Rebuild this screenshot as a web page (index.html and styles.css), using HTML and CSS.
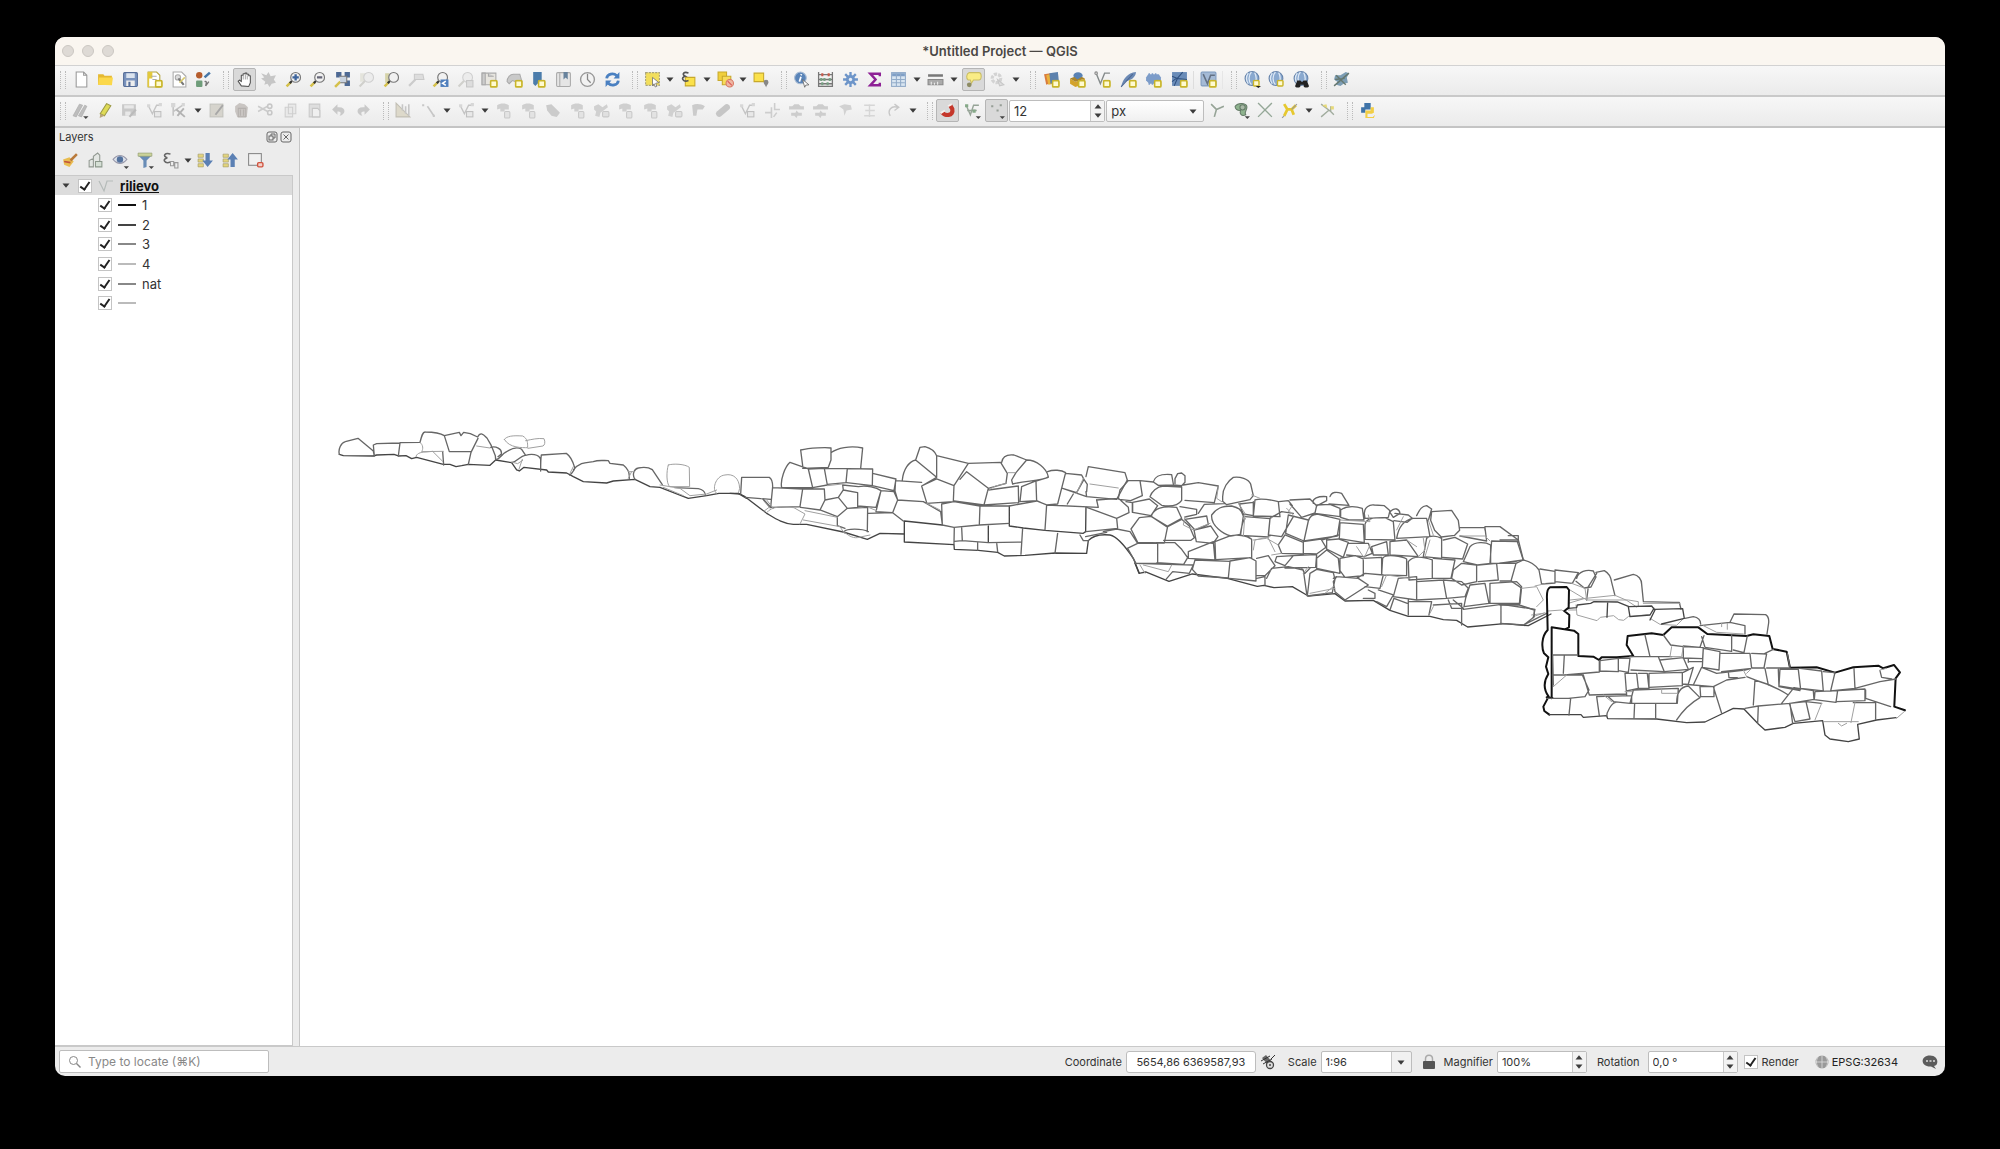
FILE: index.html
```
<!DOCTYPE html>
<html lang="en">
<head>
<meta charset="UTF-8">
<meta name="viewport" content="width=device-width, initial-scale=1.0">
<title>*Untitled Project — QGIS</title>
<link rel="stylesheet" href="styles.css">
</head>
<body>

<!-- shared shapes -->
<svg class="sprite" aria-hidden="true">
  <symbol id="down" viewBox="0 0 8 5"><path d="M0.500 0.500h7L4 4.800z" fill="#3c3c3c"/></symbol>
  <symbol id="up" viewBox="0 0 8 5"><path d="M0.500 4.500h7L4 0.200z" fill="#3c3c3c"/></symbol>
  <symbol id="plus" viewBox="0 0 8 8"><rect x="1" y="1" width="6" height="6" rx="1" fill="#fffbd0" stroke="#c9b52a" stroke-width="1.6"/></symbol>
  <symbol id="lens" viewBox="0 0 16 16"><path d="M1.5 14.5l4-4" stroke="#d5c14c" stroke-width="2.4"/><path d="M4.5 11.5l2-2" stroke="#333" stroke-width="2"/><circle cx="10" cy="6" r="4.6" fill="#f1f1f1" stroke="#777" stroke-width="1.1"/></symbol>
  <symbol id="lens-off" viewBox="0 0 16 16"><path d="M1.5 14.5l5-5" stroke="#d0d0cc" stroke-width="2"/><circle cx="10" cy="6" r="4.6" fill="#ececec" stroke="#cfcfcf"/></symbol>
  <symbol id="globe" viewBox="0 0 16 16"><circle cx="7.500" cy="7" r="6.500" fill="#8aa9cf" stroke="#6784ab"/><path d="M7 1c-3 3-3 9 0 12M10 1.500c2 3 2 8 0 11M4 2c-2 3-2 7 0 10" fill="none" stroke="#dce8f5" stroke-width="1.200"/></symbol>
  <symbol id="shape-a" viewBox="0 0 16 16"><path d="M2 3c3-2 8-2 11 0v4H9v2H5V6L2 7z" fill="#cfcfcf"/><rect x="9" y="9" width="5" height="6" rx="1" fill="#e3e3e3" stroke="#c8c8c8"/></symbol>
  <symbol id="shape-b" viewBox="0 0 16 16"><path d="M1 4l4-2 4 3 4-3 1 3-4 3-3 2-1 4-4-1 1-4-2-2z" fill="#d0d0d0"/><rect x="9" y="9" width="6" height="5" rx="1" fill="#e0e0e0" stroke="#c8c8c8"/></symbol>
  <symbol id="shape-c" viewBox="0 0 16 16"><path d="M1 4h3l2-2h4l2 2h3v3H1zM3 10h4l1-2 2 2h3v3H9l-1 2-2-2H3z" fill="#cdcdcd"/></symbol>
  <symbol id="nodes-off" viewBox="0 0 16 16"><path d="M2 3l4 8 4-8h4" fill="none" stroke="#c4c4c4" stroke-width="1.300"/><path d="M1 2h3v3H1zM12 1h3v3h-3z" fill="#d7d7d7"/><rect x="8" y="9" width="6" height="5" fill="#e8e8e8" stroke="#bfbfbf"/></symbol>
</svg>

<div class="window">
  <header class="titlebar">
    <div class="lights"><span></span><span></span><span></span></div>
    <h1>*Untitled Project — QGIS</h1>
  </header>

  <div class="toolbar">
    <div class="group g-file">
      <button class="tool" aria-label="New"><svg viewBox="0 0 16 16"><path d="M3 1h7l3 3v11H3z" fill="#fff" stroke="#999"/><path d="M10 1v3h3" fill="none" stroke="#999"/></svg></button>
      <button class="tool" aria-label="Open"><svg viewBox="0 0 16 16"><path d="M1 3h5l1 1.500h7V13H1z" fill="#e5b932"/><path d="M1 13L2 6h13l-1 7.500z" fill="#fbd84b"/></svg></button>
      <button class="tool" aria-label="Save"><svg viewBox="0 0 16 16"><rect x="1.500" y="1.500" width="13" height="13" rx="1" fill="#7a93bd" stroke="#566d98"/><path d="M4 2h8v4.500H4z" fill="#dbe3ee"/><path d="M4 9h8v5H4z" fill="#eee"/><path d="M6 10h2v4H6z" fill="#566d98"/></svg></button>
      <button class="tool" aria-label="New layout"><svg viewBox="0 0 16 16"><path d="M2 1h8l3 3v11H2z" fill="#fff" stroke="#b3a33d"/><path d="M2 1h4v6H3v8H1.500V1z" fill="#e3c93c"/><path d="M5 5h5M6 8h4" stroke="#aaa"/><use href="#plus" x="8" y="8" width="8" height="8"/></svg></button>
      <button class="tool" aria-label="Layout manager"><svg viewBox="0 0 16 16"><path d="M2 1h8l4 4v10H2z" fill="#fff" stroke="#aaa"/><circle cx="6.500" cy="6" r="2.500" fill="#ddd" stroke="#aaa"/><path d="M7 7l5 6" stroke="#777" stroke-width="2"/><path d="M8 11l5-5" stroke="#d8ca70" stroke-width="1.500"/></svg></button>
      <button class="tool" aria-label="Style manager"><svg viewBox="0 0 16 16"><circle cx="4" cy="4" r="3" fill="#b65d2d"/><rect x="1" y="9" width="6" height="6" rx="1" fill="#6f9d7a"/><path d="M9 6l5-4.500" stroke="#4677a8" stroke-width="2.400"/><path d="M9 10c2-1 2 1 1 4l3-4" fill="none" stroke="#777" stroke-width="1.300"/></svg></button>
    </div>
    <div class="group g-nav">
      <button class="tool on" aria-label="Pan"><svg viewBox="0 0 16 16"><path d="M5 14L2 9.500 3.500 8.500 5 10V4h1.700V2.500h1.800V2h1.700v1h1.800v1.500h1.500V11L12 14.500z" fill="#fff" stroke="#555" stroke-linejoin="round"/><path d="M6.800 4v4M8.800 3v5M10.600 4v4" stroke="#888" stroke-width=".7"/></svg></button>
      <button class="tool" aria-label="Pan to selection"><svg viewBox="0 0 16 16"><path d="M1 2l5 2 2-3 2 4 5-1-2 4 2 3-4 1-2 3-2-3-3 1 1-3-4-3 3-1z" fill="#c6c6c6"/></svg></button>
      <button class="tool" aria-label="Zoom in"><svg viewBox="0 0 16 16"><use href="#lens"/><path d="M7 6h6M10 3v6" stroke="#3e659d" stroke-width="2.200"/></svg></button>
      <button class="tool" aria-label="Zoom out"><svg viewBox="0 0 16 16"><use href="#lens"/><path d="M7.500 6h5" stroke="#667" stroke-width="2"/></svg></button>
      <button class="tool" aria-label="Zoom full"><svg viewBox="0 0 16 16"><path d="M2 1h5v5H2zM10 1h5v5h-5zM10 9h5v5h-5z" fill="#4d6994"/><path d="M1 15l5-5" stroke="#d5c14c" stroke-width="2.400"/><path d="M5 5h7v6H6" fill="#c8d2df" stroke="#777"/></svg></button>
      <button class="tool" aria-label="Zoom to selection"><svg viewBox="0 0 16 16"><path d="M2 2h5v8H2z" fill="#e4e4dc"/><use href="#lens-off"/></svg></button>
      <button class="tool" aria-label="Zoom to layer"><svg viewBox="0 0 16 16"><path d="M2 2h4v9H2z" fill="#d6d3a9"/><use href="#lens"/></svg></button>
      <button class="tool" aria-label="Zoom native"><svg viewBox="0 0 16 16"><path d="M1 14l6-6" stroke="#ccc" stroke-width="2"/><path d="M6 3h8l1 5H6z" fill="#ddd" stroke="#c9c9c9"/></svg></button>
      <button class="tool" aria-label="Zoom last"><svg viewBox="0 0 16 16"><use href="#lens"/><rect x="8" y="8" width="7.500" height="7" fill="#4f7fbd"/><path d="M13 9.500l-3 2 3 2" fill="none" stroke="#fff" stroke-width="1.500"/></svg></button>
      <button class="tool" aria-label="Zoom next"><svg viewBox="0 0 16 16"><use href="#lens-off"/><rect x="9" y="9" width="6" height="6" fill="#ddd" stroke="#c6c6c6"/></svg></button>
      <button class="tool" aria-label="New map view"><svg viewBox="0 0 16 16"><path d="M1 2h13v11H1z" fill="#e7e5df" stroke="#aaa"/><path d="M1 2h3v11H1zM7 2v3h5" fill="#ccc" stroke="#aaa"/><use href="#plus" x="8" y="8" width="8" height="8"/></svg></button>
      <button class="tool" aria-label="New 3D view"><svg viewBox="0 0 16 16"><path d="M1 10c0-4 3-7 6-7h6l2 7H9L6 9l-3 3z" fill="#c9c9c9" stroke="#aaa"/><use href="#plus" x="8" y="8" width="8" height="8"/></svg></button>
      <button class="tool" aria-label="New bookmark"><svg viewBox="0 0 16 16"><path d="M3 1h8v12l-3-2-3 3-2-2z" fill="#4b7cab"/><use href="#plus" x="7" y="8" width="8" height="8"/></svg></button>
      <button class="tool" aria-label="Bookmarks"><svg viewBox="0 0 16 16"><rect x="1.500" y="1.500" width="13" height="13" rx="1" fill="#e5e5e5" stroke="#aaa"/><path d="M4.500 2v12" stroke="#aaa"/><path d="M8 1h4v7l-2-2-2 2z" fill="#67829c"/></svg></button>
      <button class="tool" aria-label="Temporal controller"><svg viewBox="0 0 16 16"><circle cx="8" cy="8" r="6.500" fill="#f2f2f2" stroke="#999" stroke-width="1.300"/><path d="M8 2.500V8l3 3" fill="none" stroke="#888" stroke-width="1.200"/></svg></button>
      <button class="tool" aria-label="Refresh"><svg viewBox="0 0 16 16"><path d="M2.500 7C3 2.500 9 1.500 12 4.500M13.500 9C13 13.500 7 14.500 4 11.500" fill="none" stroke="#4a80c1" stroke-width="2.600"/><path d="M14.500 1v6H9zM1.500 15V9H7z" fill="#4a80c1"/></svg></button>
    </div>
    <div class="group g-select">
      <button class="tool" aria-label="Select features"><svg viewBox="0 0 16 16"><path d="M1.500 1.500h13v12h-13z" fill="#f2de5c" stroke="#a8a37c" stroke-dasharray="2 1"/><path d="M8 6l6 5-3 .5 1 3-1.500.5-1-3-1.500 2z" fill="#fff" stroke="#777" stroke-width=".8"/></svg></button><button class="arrow" aria-label="Select menu"><svg><use href="#down"/></svg></button>
      <button class="tool" aria-label="Select by expression"><svg viewBox="0 0 16 16"><path d="M5 6h9v8H5z" fill="#fbe14a" stroke="#c8a92b"/><path d="M8 2C4 0 1 3 5 5c-5 1-2 6 3 4" fill="none" stroke="#555" stroke-width="1.500"/></svg></button><button class="arrow" aria-label="Expression menu"><svg><use href="#down"/></svg></button>
      <button class="tool" aria-label="Deselect"><svg viewBox="0 0 16 16"><path d="M1 1h8v8H1z" fill="#f0cf3c" stroke="#c8a92b"/><path d="M5 5h8v8H5z" fill="#f7db5a" stroke="#c8a92b"/><circle cx="12" cy="11.500" r="3.500" fill="#efb7a3" stroke="#d77762"/><path d="M10 9.500l4 4" stroke="#d55"/></svg></button><button class="arrow" aria-label="Deselect menu"><svg><use href="#down"/></svg></button>
      <button class="tool" aria-label="Select by location"><svg viewBox="0 0 16 16"><path d="M1 2h9v8H1z" fill="#fbe14a" stroke="#c8a92b"/><path d="M10 10.500a2.300 2.300 0 1 1 4.600 0c0 2-2 2.500-2.300 5C12 13 10 12.500 10 10.500z" fill="#888"/></svg></button>
    </div>
    <div class="group g-attr">
      <button class="tool" aria-label="Identify"><svg viewBox="0 0 16 16"><circle cx="7" cy="6.500" r="5.500" fill="#5984b9" stroke="#a9bcd4"/><path d="M7.500 5.500L6 10M8 3l-.5 1" stroke="#fff" stroke-width="1.600"/><path d="M9 8l6 5-3 .3-1 2z" fill="#fff" stroke="#666" stroke-width=".8"/></svg></button>
      <button class="tool" aria-label="Field calculator"><svg viewBox="0 0 16 16"><path d="M1.500 1v14M14.500 1v14M2 3.500h12M2 8h12M2 12h12M2 14.500h12" stroke="#777" stroke-width="1.200"/><path d="M4 2h2v3H4zM10 2h2v3h-2z" fill="#c75a4a"/><path d="M3 6.500h2v3H3zM6 6.500h2v3H6zM11 6.500h2v3h-2zM4 10.500h2v3H4zM9 10.500h2v3H9z" fill="#77a083"/></svg></button>
      <button class="tool" aria-label="Toolbox"><svg viewBox="0 0 16 16"><path d="M8 1v14M1 8h14M3 3l10 10M13 3L3 13" stroke="#6d95c9" stroke-width="2.200"/><circle cx="8" cy="8" r="4.300" fill="#6d95c9"/><circle cx="8" cy="8" r="1.600" fill="#e6edf6"/></svg></button>
      <button class="tool" aria-label="Statistics"><svg viewBox="0 0 16 16"><path d="M13 5V2.500H4L9 8l-5 5.500h9V11" fill="none" stroke="#8e2196" stroke-width="2.300"/></svg></button>
      <button class="tool" aria-label="Attribute table"><svg viewBox="0 0 16 16"><rect x="1.500" y="1.500" width="13" height="13" fill="#d8e5f1" stroke="#91abc8"/><path d="M2 2h12v3H2z" fill="#7f9fc6"/><path d="M2 8h12M2 11h12M6 2v12M10 2v12" stroke="#91abc8"/></svg></button><button class="arrow" aria-label="Table menu"><svg><use href="#down"/></svg></button>
      <button class="tool" aria-label="Measure"><svg viewBox="0 0 16 16"><path d="M1 3h14v2.500H1z" fill="#777"/><path d="M1 8h14v5H1z" fill="#aaa" stroke="#888"/><path d="M4 10v3M7 11v2M10 10v3" stroke="#eee"/></svg></button><button class="arrow" aria-label="Measure menu"><svg><use href="#down"/></svg></button>
      <button class="tool on" aria-label="Map tips"><svg viewBox="0 0 16 16"><path d="M4 1.500h9c3 0 3 7 0 7H8l-2 3-1-3H3c-2-1-2-6 1-7z" fill="#f9ec85" stroke="#c9bd65"/><circle cx="4" cy="13" r="2.200" fill="#8d8b63"/></svg></button>
      <button class="tool" aria-label="Actions"><svg viewBox="0 0 16 16"><circle cx="7" cy="7" r="4" fill="none" stroke="#d3d3d3" stroke-width="3" stroke-dasharray="3 1"/><path d="M8 8l6 5-4 1z" fill="#ddd" stroke="#c8c8c8"/></svg></button><button class="arrow" aria-label="Actions menu"><svg><use href="#down"/></svg></button>
    </div>
    <div class="group g-source">
      <button class="tool" aria-label="Data source manager"><svg viewBox="0 0 16 16"><path d="M1 3l6-1 1 9-5 2z" fill="#d97b3c"/><path d="M3 4l7-2 1 10-6 1z" fill="#e9b23c"/><path d="M6 2l8-1 1 9-8 2z" fill="#5c81ad"/><use href="#plus" x="8" y="8" width="8" height="8"/></svg></button>
      <button class="tool" aria-label="New GeoPackage"><svg viewBox="0 0 16 16"><path d="M1 7l5 3v5l-5-3zM6 10l9-3v5l-9 3z" fill="#d3a32c"/><path d="M1 7l8-3 6 3-9 3z" fill="#a8842c"/><path d="M4 5c0-5 9-5 9 0L8 8z" fill="#5982b4"/><use href="#plus" x="8" y="8" width="8" height="8"/></svg></button>
      <button class="tool" aria-label="New shapefile"><svg viewBox="0 0 16 16"><path d="M2 2l4 10 4-10h5" fill="none" stroke="#858b8b" stroke-width="1.300"/><circle cx="2" cy="2" r="1.200" fill="#eee" stroke="#888"/><use href="#plus" x="8" y="8" width="8" height="8"/></svg></button>
      <button class="tool" aria-label="New SpatiaLite layer"><svg viewBox="0 0 16 16"><path d="M1 15C3 7 7 2 15 1c0 5-5 8-10 9z" fill="#6b89b5"/><path d="M1 15L12 3" stroke="#4d6994"/><use href="#plus" x="8" y="8" width="8" height="8"/></svg></button>
      <button class="tool" aria-label="New memory layer"><svg viewBox="0 0 16 16"><path d="M3 3h10l2 3v6H4L1 9V6z" fill="#7c9cc9"/><path d="M4 2v2M7 2v2M10 2v2M4 11v2M7 11v2" stroke="#7c9cc9" stroke-width="1.400"/><use href="#plus" x="8" y="8" width="8" height="8"/></svg></button>
      <button class="tool" aria-label="New mesh layer"><svg viewBox="0 0 16 16"><rect x="1" y="1" width="14" height="13" fill="#6a8cb8"/><path d="M1 5l5 2 5-6M6 7l-3 7M6 7l9 1M1 10l4-3" fill="none" stroke="#2f507f"/><use href="#plus" x="8" y="8" width="8" height="8"/></svg></button>
      <span class="rule"></span>
      <button class="tool" aria-label="New virtual layer"><svg viewBox="0 0 16 16"><rect x="1" y="1" width="14" height="13" rx="1" fill="#a4bad6" stroke="#7f9bbf"/><path d="M3 3l4 9 3-8h4" fill="none" stroke="#637184" stroke-width="1.500"/><use href="#plus" x="8" y="8" width="8" height="8"/></svg></button>
      <span class="rule faint"></span>
    </div>
    <div class="group g-web">
      <button class="tool" aria-label="Add web service"><svg viewBox="0 0 16 16"><use href="#globe"/><use href="#plus" x="8" y="8" width="7" height="7"/><path d="M11 14h5l-2.500 2z" fill="#222"/></svg></button>
      <button class="tool" aria-label="Add map service"><svg viewBox="0 0 16 16"><use href="#globe"/><use href="#plus" x="8" y="8" width="7" height="7"/></svg></button>
      <button class="tool" aria-label="Search catalog"><svg viewBox="0 0 16 16"><use href="#globe"/><path d="M4 9h3l1 1h1l1-1h3l2 5c0 2-5 2-5 0v-1H7v1c0 2-5 2-5 0z" fill="#222"/></svg></button>
    </div>
    <div class="group g-plugin">
      <button class="tool" aria-label="Plugin"><svg viewBox="0 0 16 16"><path d="M2 4h5l5-3 3 1-2 4 1 5-4 1-3 2-4-1 1-3-3-2z" fill="#7c9db4"/><path d="M1 14L15 2M3 4l9 9M2 8l9-1" stroke="#66786f" stroke-width="1.300"/></svg></button>
    </div>
  </div>

  <div class="toolbar digitizing">
    <div class="group g-edit">
      <button class="tool" aria-label="Current edits"><svg viewBox="0 0 16 16"><path d="M1 13L7 2l3 1-6 11zM6 13l6-10 2 1-5 10z" fill="#bdbdbd" stroke="#aaa" stroke-width=".6"/><path d="M10.500 13.500h5L13 16z" fill="#444"/></svg></button>
      <button class="tool" aria-label="Toggle editing"><svg viewBox="0 0 16 16"><path d="M3 11L9 1.500l4 2L7 13z" fill="#dfdb56" stroke="#9d9b48"/><path d="M3 11l-.5 4L7 13z" fill="#baa67b"/></svg></button>
      <button class="tool" aria-label="Save edits"><svg viewBox="0 0 16 16"><path d="M1 2h13v11H1z" fill="#c9c9c9"/><path d="M3 3h9v3H3zM4 9h5v4H4z" fill="#e8e8e8"/><path d="M8 14l6-7" stroke="#bbb" stroke-width="2"/></svg></button>
      <button class="tool" aria-label="Add feature"><svg viewBox="0 0 16 16"><use href="#nodes-off"/></svg></button>
      <button class="tool" aria-label="Vertex tool"><svg viewBox="0 0 16 16"><path d="M3 13V3M3 9l9-6" stroke="#c4c4c4" stroke-width="1.500"/><path d="M1 1h4v4H1zM11 1h3v3h-3z" fill="#d6d6d6"/><path d="M6 7l8 7M7 13l6-7" stroke="#b3b3b3" stroke-width="1.800"/></svg></button><button class="arrow" aria-label="Vertex menu"><svg><use href="#down"/></svg></button>
      <button class="tool" aria-label="Modify attributes"><svg viewBox="0 0 16 16"><rect x="2" y="2" width="12" height="12" fill="#d6d4cd" stroke="#c2c2bc"/><path d="M7 12l7-9" stroke="#a7a7a7" stroke-width="1.800"/></svg></button>
      <button class="tool" aria-label="Delete selected"><svg viewBox="0 0 16 16"><path d="M2 4l4-3 5 1 3 3-1 9H4L2 9z" fill="#c9c5c2"/><path d="M5 6h7v8H5zM7 7v6M10 7v6" fill="none" stroke="#b5b1ae"/></svg></button>
      <button class="tool" aria-label="Cut"><svg viewBox="0 0 16 16"><path d="M1 4l9 5M1 9l9-5" stroke="#ccc" stroke-width="1.500"/><circle cx="12" cy="4" r="2" fill="none" stroke="#c7c7c7" stroke-width="1.500"/><circle cx="12" cy="10" r="2" fill="none" stroke="#c7c7c7" stroke-width="1.500"/></svg></button>
      <button class="tool" aria-label="Copy"><svg viewBox="0 0 16 16"><path d="M6 2h7v9H6zM3 5h7v9H3z" fill="#e9e9e9" stroke="#cfcfcf"/></svg></button>
      <button class="tool" aria-label="Paste"><svg viewBox="0 0 16 16"><path d="M3 2h10v12H3z" fill="#dedede" stroke="#cacaca"/><path d="M6 6h5l2 2v6H6z" fill="#efefef" stroke="#c6c6c6"/></svg></button>
      <button class="tool" aria-label="Undo"><svg viewBox="0 0 16 16"><path d="M7 2v3c9-1 8 7 2 8 2-3 1-4-2-4v3L2 7z" fill="#c9c9c9"/></svg></button>
      <button class="tool" aria-label="Redo"><svg viewBox="0 0 16 16"><path d="M9 2v3C0 4 1 12 7 13 5 10 6 9 9 9v3l5-5z" fill="#c9c9c9"/></svg></button>
    </div>
    <div class="group g-advanced">
      <button class="tool" aria-label="Advanced digitizing"><svg viewBox="0 0 16 16"><path d="M1 1l13 13H1z" fill="#ddd9ca" stroke="#c1beb4"/><path d="M7 8V2M10 11V4M13 13V2" stroke="#c6c6c6" stroke-width="1.500"/></svg></button>
      <button class="tool" aria-label="Digitize with segment"><svg viewBox="0 0 16 16"><path d="M7 4l6 9" stroke="#c6c6c6" stroke-width="1.500"/><path d="M2 2h2v2H2zM12 12h2v2h-2z" fill="#c8c8c8"/></svg></button><button class="arrow" aria-label="Segment menu"><svg><use href="#down"/></svg></button>
      <button class="tool" aria-label="Move feature"><svg viewBox="0 0 16 16"><use href="#nodes-off"/></svg></button><button class="arrow" aria-label="Move menu"><svg><use href="#down"/></svg></button>
      <button class="tool" aria-label="Rotate feature"><svg><use href="#shape-a"/></svg></button>
      <button class="tool" aria-label="Scale feature"><svg><use href="#shape-a"/></svg></button>
      <button class="tool" aria-label="Simplify feature"><svg viewBox="0 0 16 16"><path d="M2 3l5-1 5 5 3 3-3 4-5-1-4-5z" fill="#cbcbcb"/></svg></button>
      <button class="tool" aria-label="Add ring"><svg><use href="#shape-a"/></svg></button>
      <button class="tool" aria-label="Add part"><svg><use href="#shape-b"/></svg></button>
      <button class="tool" aria-label="Fill ring"><svg><use href="#shape-a"/></svg></button>
      <button class="tool" aria-label="Delete ring"><svg><use href="#shape-a"/></svg></button>
      <button class="tool" aria-label="Delete part"><svg><use href="#shape-b"/></svg></button>
      <button class="tool" aria-label="Reshape"><svg viewBox="0 0 16 16"><path d="M2 3c4-2 9-1 12 1l-2 3H7l-1 6H3z" fill="#cbcbcb"/></svg></button>
      <button class="tool" aria-label="Offset curve"><svg viewBox="0 0 16 16"><path d="M4 11l7-6" stroke="#c6c6c6" stroke-width="6" stroke-linecap="round"/></svg></button>
      <button class="tool" aria-label="Split features"><svg><use href="#nodes-off"/></svg></button>
      <button class="tool" aria-label="Trim or extend"><svg viewBox="0 0 16 16"><path d="M10 1v6h5M7 5v10M1 10h6M12 10l-3 4" fill="none" stroke="#cdcdcd" stroke-width="1.500"/></svg></button>
      <button class="tool" aria-label="Split parts"><svg><use href="#shape-c"/></svg></button>
      <button class="tool" aria-label="Merge features"><svg><use href="#shape-c"/></svg></button>
      <button class="tool" aria-label="Merge attributes"><svg viewBox="0 0 16 16"><path d="M2 4l5-2 6 1 1 4-5 1-2 5-1-6z" fill="#d2d2d2"/></svg></button>
      <button class="tool" aria-label="Rotate symbols"><svg viewBox="0 0 16 16"><path d="M3 3h10M4 8h9M3 13h10M8 2v12" stroke="#d6d6d6" stroke-width="1.300"/></svg></button>
      <button class="tool" aria-label="Offset symbols"><svg viewBox="0 0 16 16"><path d="M4 13C1 8 5 3 11 5M8 2l4 3-4 3" fill="none" stroke="#c7c7c7" stroke-width="1.300"/></svg></button><button class="arrow" aria-label="Offset menu"><svg><use href="#down"/></svg></button>
    </div>
    <div class="group g-snap">
      <button class="tool on" aria-label="Enable snapping"><svg viewBox="0 0 16 16"><path d="M3 9.500c2 4 11 4 9.500-3L10.500 3" fill="none" stroke="#c5372b" stroke-width="4"/><path d="M1.500 10.500l4-2.500M8.500 4l3.500-2" stroke="#f4f0ee" stroke-width="1.800"/></svg></button>
      <button class="tool" aria-label="Snapping layers"><svg viewBox="0 0 16 16"><path d="M2 3l4 9 3-9h5M3 8h9" fill="none" stroke="#96a497" stroke-width="1.300"/><path d="M1 2h3v3H1zM8 7h3v3H8z" fill="#85a988"/><path d="M11 13.500h5L13.500 16z" fill="#444"/></svg></button>
      <button class="tool on" aria-label="Snapping type"><svg viewBox="0 0 16 16"><path d="M3 3h2v2H3zM11 2h2v2h-2zM8 7h2v2H8z" fill="#969e96"/><path d="M11 13.500h5L13.500 16z" fill="#444"/></svg></button>
      <span class="spin tolerance"><input type="text" value="12" aria-label="Tolerance"><span class="steps"><button aria-label="Increase"><svg><use href="#up"/></svg></button><button aria-label="Decrease"><svg><use href="#down"/></svg></button></span></span>
      <span class="combo units"><select aria-label="Units"><option>px</option></select><svg><use href="#down"/></svg></span>
      <button class="tool" aria-label="Topological editing"><svg viewBox="0 0 16 16"><path d="M2 2l5 5 7-3M7 7l-2 7" fill="none" stroke="#96a497" stroke-width="1.500"/></svg></button>
      <button class="tool" aria-label="Overlap"><svg viewBox="0 0 16 16"><path d="M2 4c3-4 10-3 11 0 1 3-3 5-1 8-4 2-6-1-5-4-3 0-5-1-5-4z" fill="#8eb38e" stroke="#657b68"/><circle cx="9" cy="5" r="2.500" fill="#a9b9a7" stroke="#657b68"/><path d="M11 13.500h5L13.500 16z" fill="#444"/></svg></button>
      <button class="tool" aria-label="Snap on intersection"><svg viewBox="0 0 16 16"><path d="M1 1l13 13M14 1L1 14" stroke="#95a898" stroke-width="1.300"/></svg></button>
      <button class="tool" aria-label="Tracing"><svg viewBox="0 0 16 16"><path d="M3 2l3 5h4l4-4M6 7l-3 6M10 7l2 5" fill="none" stroke="#e6c82f" stroke-width="2.600"/><path d="M10 7l5-5M3 13l-2 2" stroke="#999"/></svg></button><button class="arrow" aria-label="Tracing menu"><svg><use href="#down"/></svg></button>
      <button class="tool" aria-label="Self snapping"><svg viewBox="0 0 16 16"><path d="M2 2l9 7 3 3M11 9V4M2 14l7-6" fill="none" stroke="#a2ad9f" stroke-width="1.300"/><path d="M3 3l4-1 1 4zM11 4h3v3h-3z" fill="#e6d97a"/></svg></button>
    </div>
    <div class="group g-plugin">
      <button class="tool" aria-label="Python console"><svg viewBox="0 0 16 16"><path d="M5 1h6v6H6v3H2V5h3z" fill="#3f73a8"/><path d="M11 5h3v5l-2 1H8v3h5l2-2-1 3H6V8h5z" fill="#f2ce45"/></svg></button>
    </div>
  </div>

  <main class="content">
    <aside class="layers">
      <div class="dock-title">
        <h2>Layers</h2>
        <button aria-label="Float"><svg viewBox="0 0 12 12"><rect x="1" y="1" width="10" height="10" rx="2"/><rect x="3" y="5" width="4" height="4"/><path d="M5 5V3h4v4H7"/></svg></button>
        <button aria-label="Close"><svg viewBox="0 0 12 12"><rect x="1" y="1" width="10" height="10" rx="2"/><path d="M3.500 3.500l5 5M8.500 3.500l-5 5"/></svg></button>
      </div>
      <div class="dock-tools">
        <button class="tool" aria-label="Layer styling"><svg viewBox="0 0 16 16"><path d="M1 7l6-2 4 4-4 5-5-2z" fill="#e9bd50"/><path d="M2 9l6 1" stroke="#c2543c" stroke-width="1.500"/><path d="M8 8l6-6" stroke="#b97a3c" stroke-width="2.400"/></svg></button>
        <button class="tool" aria-label="Add group"><svg viewBox="0 0 16 16"><path d="M2 14V8l4-2v8zM6 14V4l4-3 2 2v9" fill="#e3e6e3" stroke="#929992"/><path d="M8 9h6v5H8z" fill="#d5dfd5" stroke="#8c988c"/></svg></button>
        <button class="tool" aria-label="Map themes"><svg viewBox="0 0 16 16"><path d="M1 7c4-5 9-5 13 0-4 5-9 5-13 0z" fill="#dde3ec" stroke="#99a"/><circle cx="7.500" cy="7" r="3" fill="#54729d"/><path d="M11 13.500h5L13.500 16z" fill="#444"/></svg></button>
        <button class="tool" aria-label="Filter legend"><svg viewBox="0 0 16 16"><path d="M1 3l5 5v7l3-1V8l5-5z" fill="#688cb6"/><path d="M1 1h13v3H1z" fill="#cbd39a" stroke="#939c70" stroke-width=".6"/><path d="M11 13.500h5L13.500 16z" fill="#444"/></svg></button>
        <button class="tool" aria-label="Filter by expression"><svg viewBox="0 0 16 16"><path d="M8 2C3 0 0 4 5 5.500c-5 1-3 6 3 4" fill="none" stroke="#666" stroke-width="1.500"/><path d="M8 9h3v4H8zM12 10h3v5h-3z" fill="#eee" stroke="#999"/></svg></button><button class="arrow" aria-label="Filter menu"><svg><use href="#down"/></svg></button>
        <button class="tool" aria-label="Expand all"><svg viewBox="0 0 16 16"><path d="M1 2h5v3H1zM1 6.500h5v3H1zM1 11h5v3H1z" fill="#e3d57c" stroke="#a39b68" stroke-width=".6"/><path d="M8 1h4v7h3l-5 6-5-6h3z" fill="#5b80b4"/></svg></button>
        <button class="tool" aria-label="Collapse all"><svg viewBox="0 0 16 16"><path d="M1 2h5v3H1zM1 6.500h5v3H1zM1 11h5v3H1z" fill="#e3d57c" stroke="#a39b68" stroke-width=".6"/><path d="M8 14h4V7h3l-5-6-5 6h3z" fill="#5b80b4"/></svg></button>
        <button class="tool" aria-label="Remove layer"><svg viewBox="0 0 16 16"><rect x="1.500" y="1.500" width="12" height="11" fill="#f1f1f1" stroke="#888"/><rect x="10" y="10" width="5" height="4" rx="1" fill="#f3d1c9" stroke="#d0533f" stroke-width="1.300"/></svg></button>
      </div>
      <div class="tree">
        <div class="root">
          <svg class="twisty"><use href="#down"/></svg>
          <input type="checkbox" id="rilievo" checked>
          <svg class="vector" viewBox="0 0 16 14"><path d="M1 2l5 10 3-10h6" fill="none" stroke="#b5bbb9" stroke-width="1.200"/></svg>
          <label for="rilievo">rilievo</label>
        </div>
        <ul>
          <li><input type="checkbox" id="c1" checked><span class="line l1"></span><label for="c1">1</label></li>
          <li><input type="checkbox" id="c2" checked><span class="line l2"></span><label for="c2">2</label></li>
          <li><input type="checkbox" id="c3" checked><span class="line l3"></span><label for="c3">3</label></li>
          <li><input type="checkbox" id="c4" checked><span class="line l4"></span><label for="c4">4</label></li>
          <li><input type="checkbox" id="cnat" checked><span class="line l3"></span><label for="cnat">nat</label></li>
          <li><input type="checkbox" id="cother" aria-label="Other" checked><span class="line l4"></span></li>
        </ul>
      </div>
    </aside>

    <section class="map">
      <svg viewBox="300 128 1645 918" role="img" aria-label="Wall survey">
        <!-- west end -->
        <g transform="translate(320 410) scale(.3333)">
          <path class="s2" d="M58 133L70 137 160 138 170 135 222 133 235 138 258 137 275 146 290 142 370 163 390 163 408 170 425 167 445 163 510 166 527 150 575 158 590 180 598 183 612 172 680 180 685 186 740 189 760 200 790 215 860 219 880 213 945 208 990 230 1020 232 1105 265 1160 257 1197 250 1255 250 1280 265"/>
          <path class="s3" d="M58 133c-4-15 5-35 18-38l38-10 46 38 3 15M163 138L160 105 170 101 240 99 235 138M240 98l60-1c5-20 8-32 16-31 20 0 45 3 57 11l45-10 5 10 8-10 20 4 22 10c10-20 22-2 28 3 6 12 12 18 15 28l10 25 1 12M373 77l15 48 65 0M368 125l3 40M474 85L453 127 445 163M527 150c15-5 20-18 28-22 20-14 36-20 50-10l12 18c15-5 40-5 45 12v35M512 112c15-5 35 5 32 20l-10 8M575 158c20-5 25-20 40-22M662 180c0-15 0-30 2-45l75-5c12 8 20 25 25 42 3 10-12 18-14 24M760 180c20-25 40-22 60-25 15-6 30-3 45-3l5 8 40 5c15 12 20 22 18 40M945 208c-10-15-2-32 10-34 20-4 30-3 42 5l30 45M1065 233l70 3c12 2 20 8 22 20"/>
          <path class="s4" d="M300 97c10 8 10 20 5 28l65-1M288 140c0-8 12-14 30-14l20-2 30 30M470 108l40 6M553 88c8-10 25-12 55-10 15 8 15 20 15 35-15 0-55 2-70-25M617 92c20-4 35-8 55-6 5 10 2 20-3 22l-45 7M575 156l18 5 15-10M597 178l10-30M750 190l10-20M925 185h18M925 205l10-20M1045 165c15-5 50-3 63 7l1 58-60 0c-10-10-10-45-4-65M1190 250c-15-8-5-52 25-55 25-5 43 10 44 40l-4 16M1020 225l60 10 30 22 50-5 30-12M1030 232l60 25"/>
        </g>
        <!-- terraced stretch -->
        <g transform="translate(730 420) scale(.3333)">
          <path class="s2" d="M0 220L30 222 45 230 110 280C135 295 160 312 190 313L230 313 340 336 412 358 450 340 523 342 523 305M523 338L523 366 672 374 673 388 745 391 803 397 823 408 885 406 975 399 1070 400 1075 362C1090 345 1110 342 1140 345 1165 350 1190 385 1210 415L1228 460M838 258L838 318 880 324 945 331 1060 340 1067 335 1068 262M775 318v48M523 303L637 315"/>
          <path class="s3" d="M32 222L35 172 118 172Q128 178 128 200L122 262M45 232L122 238M128 203L218 207 210 260 122 262M155 203C150 180 165 140 180 127L235 147 248 203zM235 147L283 145 292 195 248 203M218 137L212 90C240 83 290 82 303 84L303 120 295 142 218 145M305 97C320 85 360 75 398 84L392 145M283 145L352 146 348 188 292 193M352 146L428 147 427 197 350 188M428 160L498 177 492 212 427 197M218 207L283 207 285 240 270 270 212 262M285 240L325 232 352 265 322 290 270 270M325 232L340 210 383 218 383 262 352 265M338 195L340 210M338 195L385 200C410 195 440 203 453 212L438 262 383 258M453 212L492 215 503 240 488 278 438 275zM352 265L413 262 412 335M322 290V317L345 325M415 280L488 278 520 303M503 240L580 245 632 275 637 313M498 182L575 187M497 180L495 213 503 240M517 180C520 150 535 125 557 120L620 172 575 198 590 248M557 120L570 82 585 80C600 84 615 95 620 107L620 172M620 107L715 130 672 197 620 177M575 198L620 177M672 197L670 245 590 250M690 178L710 155 775 205 762 255 672 243M715 130L812 127 832 160 828 190 775 205M815 127C818 108 835 103 852 105L890 120 858 158M890 120C920 120 950 145 955 170 940 182 890 182 848 192L845 180 858 158M775 210L865 198 866 248 762 255M870 245L875 200 918 183 920 242zM918 183L955 172M953 155C970 148 995 150 1007 158L983 252 950 255 920 242M635 252L672 245 750 258 748 315 672 322 637 315zM750 258L838 258 920 243 950 255 945 330M748 315L838 310M950 255L1105 262M673 322L672 372M695 322L697 362 775 368 875 366M878 325L873 403M743 366V391M800 368L803 395M983 340L975 400M1007 160L1055 165 1062 178 1040 218 998 205M998 205L1070 230M1030 222L1012 252M1068 170L1075 140 1185 158 1192 180 1160 238 1070 230 1068 215M1062 178L1072 193 1070 215M1100 240L1105 262M342 335C350 325 395 325 415 335M673 364L697 362"/>
          <path class="s4" d="M190 262l35 20-15 30M110 278c15-20 50-20 80-15M225 272l97 20M220 300l110 20 13 20M342 335c10 10 25 20 40 18l38-8M292 197l45-5M110 240l20 25M415 262l25 10M590 250l40 20M835 158h20M775 213c15-20 45-18 55-23M1080 192l85 12M1040 220l20-45M95 235l25 30M100 275l20-15"/>
          <path class="s3" d="M100 238L122 262M1050 345L1060 362 1075 362M1067 350L1130 337"/>
        </g>
        <!-- middle stretch -->
        <g transform="translate(1070 450) scale(.3333)">
          <path class="s2" d="M195 340l12 30 20-4 70 28 70-22 105 13 90 24 20-3 30 7 55-3 48 28 80-7 30 22 85-2 50 30 55 18 35 0 30 0 40 10 40 2 33 20 110-10 72 6 68-35"/>
          <path class="s3" d="M80 150L145 145 175 172 177 188 140 205 50 172M140 205L143 235 48 245M100 245L140 237 180 245 203 280 172 295M145 145L150 120 175 92M168 155L187 158 187 187M172 92l38 0 7 45-35 15-35-4M210 92l40 4 15 10 45-1 25 2 10-10 0-20-10-8-12 2-8 15v15M250 96c5-18 20-25 55-22l5 28M240 140c5-15 20-30 40-32l55 3 0 40c-10 15-30 20-60 15zM340 105l45-7 60 10-12 50-88-7M458 140c0-25 15-47 32-58 20-3 46 5 52 20l8 35-10 12-70 15-12-10zM188 157l50-10 25 20-20 30-55-10zM245 195c10-20 30-28 75-23l15 33-45 25-45-30zM208 203l35-4 50 30-10 50-80-2-20-40zM293 230l42-22 23 20 15 35-10 8-82 0M330 170l50 8v15l-35 8M345 208l65-10 5 25-40 17zM385 190l18-27 60-2M372 240l50-12 22 32-15 20-50-5zM425 195c15-20 30-27 60-27 20 5 30 10 35 30l-8 55-30 5c-20-5-60-30-57-63zM555 150c20-7 50 0 70 5l5 45-80-2zM550 155l0 42-30-5-12-30 42-5M627 155l28-3 12 15M660 150l60-3 20 20-5 22-40 13-35-40M730 160c-5-15 15-22 40-20v12l-28 15M780 140c5-15 20-15 35-10l22 36-60-4M740 165l40-2 30 12v25l-75-10M812 180c20-15 50-10 65-5l5 35-45 0-25-8zM883 190c0-18 15-27 30-25l30 2 17 15-5 20-70 3zM960 185c15-15 28-8 30 5l-20 12-10-15M975 190l40 5 12 10-15 12-40-5M1040 197c10-20 15-28 30-30l15 10-10 35M1085 185l60-4 20 30 4 30-15 15-40 5-20-20-12-30zM980 265c5-30 20-55 50-60l40 0 10 55zM885 268v-45c5-18 20-20 60-20l25 12 5 55zM810 218l70 5 3 55-75-12zM715 213c5-15 15-22 30-20l65 15-8 50-100 15zM715 210l-60-15-8 55 55 23M670 190l-35-5-35 20-5 50 40 5 35-60M525 200l75 6-5 55-85-5c5-20 5-40 15-50M435 275l45-17c20-5 50-2 65 10v55l-108 6zM355 305l75-30 5 55-80-5zM260 278l55 0 20 20 18 25-12 20-80-5M203 280h60v60h-65l-25-45M195 340l175 5-12 25-50-5-20 23M375 330l105 4-5 50-90-6-18-20zM480 333l60-10 18 10v60l-80-8M560 325l35-8 20 30-30 30h-25M620 320l50-3-25 30-30-12zM670 317l70-3-3 38-92 2M645 255l-20 30 10 25 65 2v-35zM700 275l0 35 40 2 28-20-15-25zM770 270l35-3 30 10-15 45-50-25zM755 270l50-15M740 325l30-25 35 25 5 45-70-15zM810 325l45-8 25 10v50l-55 5-15-20zM835 280l60 0 12 30-25 10-52-5M905 290l45-15 5 40-45 0zM960 275l50-5 35 50-85-5zM938 325c10-15 60-5 72 2l0 50-75-2zM880 325l55-3v50M1070 265c10-10 30-8 45 0v60l-55-5zM1120 270l35-8 38 20-15 45-60-5M1090 325l65 5-12 55h-55M1015 335c15-20 45-15 72-5v55l-70 5zM1180 335l20-45c15-15 45-15 62-5v55l-40 5zM1150 360l25-20 45 5v50l-45 10-30-20zM1225 345l55-5 5 50-60 5M1265 273l77 2 18 55-75 10h-25zM1245 240l0-10h45l55 40M1170 233h75l5 40-80-15M1315 257h30v20M1290 340l50-5M1040 395l80-5 10 55-90 5zM985 385l55-5v70l-70-10zM1120 390l55 5 20 20-10 25-55 5M1200 405l45-5 12 60-75 10 5-25zM1260 400l80-5 15 15-5 50-90 0zM790 395l10-15 65 5 30 20-70 45-30-25zM720 370l20-12 50 10 5 20-8 40-75 10zM590 385l15-30 50-5 45 10 10 70M560 385l25-5v25M860 385l25-15 55 5-10 40-45-5M925 420l45 15-20 35-30-15M1015 455l70 0-8 40M1015 450v45M960 480l12-35 40 15M1090 465l85-5v65M1180 478l115-15 100 15-5 25M1293 465v57M1135 450l10 25h35M1150 450l30 25M695 355l10 15 15-15M895 420l20 10v15l-35 0M800 380l-10 5"/>
          <path class="s4" d="M545 135l25 10M345 200l-5 25 30 15 50-20M455 155l-15-10 5-35M810 210l90 5-5-20M900 285l-20 45M1000 200l-20 40M1040 290l-30-20M1045 320l20-20-5-35M1075 210l15 45M550 270l40-5 35 20M550 300l5-30 45-10M595 265l20 40M605 315l30-5M220 345l75 20 10-20M210 345l15 25M700 370l15-20M765 430l25-20M720 430l75-15M935 410l15-35 70 10M1090 470l-10 20M1385 495l35-5M650 175l20 20M655 185l10-15M505 160l20 30-5 70M880 320l-20-30M1080 270l-15 50M1170 258l75 0 15 15"/>
        </g>
        <!-- east end -->
        <g transform="translate(1500 540) scale(.3333)">
          <path class="s3" d="M0 0h55l15 60M0 70h48l22-10c25 5 40 20 47 30l8 43M48 70l-15 53 30 20-5 50-60 0M0 123h35M120 87l45 7v35l-40 3M165 90l70 8-18 32-52-5M0 195l58 0 45 15 0 20-32 25-70-5M70 255l70-35M230 115c5-20 30-28 50-22l8 18-15 30-20 3-25-20M288 97l25-5c15 8 20 20 22 35l10 40M343 120l57-17c15 2 25 15 25 30l5 50M260 180l5-40 25-40M430 185l90 2 18 0 5 20M555 235l25-5c12 2 22 10 22 22M600 257l90-10 12-25 95 2c8 5 10 15 9 25l-5 33M690 247l45 10v25"/>
          <path class="s4" d="M65 145l45-5 20 40-20 20M105 138l30-7M135 218l-30 10M215 130l40 15 5 35-50-30M210 180l135-14 35 15 30 20M260 180l125 0 30 5v12M205 190l50-15M228 195l3 30 60 17 10-10 40-5 15 12 15 2 15-12 65-5M450 235l30 18 50 3 20-20M145 213l40-3 20 12M205 210h25M540 190l-110 0M682 250v18M665 250v10M610 257l40 20 80 5"/>
          <path class="s2" d="M205 205L230 203 232 195 272 190 282 185 352 186 387 200 455 198 463 208 548 206 553 235 485 252M323 187l-2 45M385 200l5 30 60-5 12-20M465 210l-15 30"/>
          <path class="s1" d="M155 475V262L222 272 235 282 235 348 280 350 297 360 305 352 350 352 400 348 380 315 383 288 455 280 490 285 515 262 595 262 622 282 740 288 760 283 808 288 818 327 860 335 870 383 950 382 1005 398 1060 382 1135 377 1150 385 1182 375 1200 397 1187 415 1183 500 1215 511M140 472L157 473M195 268L207 262 208 225 193 213 206 203 207 150 200 141 150 142C138 147 141 170 141 180L143 270C123 290 125 325 132 340L145 352 138 380 145 402C130 425 132 450 146 470L130 500 133 513 148 524"/>
          <path class="s2" d="M148 524L243 524 250 532 320 527 323 536 470 537 560 548 615 546 665 522 700 505 732 507 775 552 795 570 855 562 880 550 968 542 975 585 990 597 1045 605 1078 597 1073 553 1130 540 1188 533"/>
          <path class="s3" d="M140 475h65l50-5 12-20-20-45-90 0M158 345h75M193 345L190 400M158 345L160 435M193 405L298 396 298 362M250 405L268 465 378 462M300 362l55-7v40l-55-2zM355 355h35l-5 42-30-5M390 350h85l18 45-100-5M480 360l70-7 15 35-72 7M435 285l15 65 65 0M490 285l22 30 38 5 50 2 12-35M550 318l60 5-2 33-58-2zM550 355l15 0 0 12M610 325l50 10-3 55-50-8zM605 290l10 32 80 12v-50M660 340l90 0 5 45-90 10M700 330l32 8 10-50M755 340l45 2-8 42-35 0M795 340l25-12M862 340l8 44-70 0M840 388l55 0 7 60-65-10zM900 385l65 8 5 60-68-8M970 395l35 3-13 55M1062 385L1065 445 992 453M1065 445l75-20 48-8M1140 392l5 20 30 5M375 400L380 465M375 400l35 0 5 45-35 8M415 400l27 0 5 45-30 0M447 400l100-3v40l-100 5zM550 397l30-15-15 50M580 435L605 382 650 400M548 432L580 435 640 440 680 420 735 412M565 365h40M650 400L735 390 755 385M685 395l2 18 25 0M740 410L765 420 760 495M765 420C800 430 835 445 865 465M640 440L665 520M600 440h42v30h-40zM530 490c0-30 12-50 35-52l35 35C570 490 550 510 530 540M390 490l10-40 135-5-3 45zM290 470l105-3v22M340 485l50 5M320 530c0-15 15-40 25-42M325 470L345 488M212 475L207 525M290 470l8 57M404 490L402 535M467 490v45M735 505L775 498 773 550M775 498l95-8 8 60M868 490l50-5 12 52-45 8zM845 490L882 443 940 452 942 478 870 490M945 455l68-3-5 35-65-8zM1015 452l80-5v35l-85 3M1060 488l67 0 0 50M1097 450l0 25 75 25M795 385l10 50M835 388L837 440 900 452M918 485L965 490"/>
          <path class="s4" d="M485 445v15h45M160 440l40-35M310 465l25 20M965 490l-20 50M1065 488l-12 60M1015 550l10 8 15-8M970 545h105M1190 535l25-22M515 320l-5 30 35 0 5-30M1160 385l-20 5M740 400l15-15M395 455h-20M730 390l10 20"/>
        </g>
      </svg>
    </section>
  </main>

  <footer class="statusbar">
    <div class="locate">
      <svg viewBox="0 0 14 14"><circle cx="5.500" cy="5.500" r="4" fill="none" stroke="#888"/><path d="M8.500 8.500l4 4" stroke="#888" stroke-width="1.400"/></svg>
      <input type="text" placeholder="Type to locate (⌘K)" aria-label="Locate">
    </div>
    <label for="coord">Coordinate</label>
    <input type="text" id="coord" class="coord" value="5654,86 6369587,93">
    <button class="mini" aria-label="Toggle extents"><svg viewBox="0 0 16 16"><path d="M2 4l4-3 6 7-3 4z" fill="#666"/><path d="M1 7l9-5M3 10l9-5M11 5l4-4" stroke="#333"/><circle cx="10" cy="11" r="3.500" fill="#ddd" stroke="#444" stroke-width="1.300"/><circle cx="10" cy="11" r="1" fill="#444"/></svg></button>
    <label for="scale" class="scale-label">Scale</label>
    <span class="combo scale"><select id="scale"><option>1:96</option></select><svg><use href="#down"/></svg></span>
    <button class="mini lock" aria-label="Lock scale"><svg viewBox="0 0 14 16"><path d="M3.500 8V5c0-5 7-5 7 0v3" fill="none" stroke="#aaa" stroke-width="1.500"/><rect x="1" y="7" width="12" height="8" rx="1" fill="#555"/></svg></button>
    <label for="magnifier">Magnifier</label>
    <span class="spin zoom"><input type="text" id="magnifier" value="100%"><span class="steps"><button aria-label="Increase"><svg><use href="#up"/></svg></button><button aria-label="Decrease"><svg><use href="#down"/></svg></button></span></span>
    <label for="rotation" class="rotation-label">Rotation</label>
    <span class="spin zoom"><input type="text" id="rotation" value="0,0 °"><span class="steps"><button aria-label="Increase"><svg><use href="#up"/></svg></button><button aria-label="Decrease"><svg><use href="#down"/></svg></button></span></span>
    <input type="checkbox" id="render" checked>
    <label for="render">Render</label>
    <button class="crs"><svg viewBox="0 0 16 16"><circle cx="8" cy="8" r="6.500" fill="#999"/><path d="M1 8h14M8 1v14M4 3c-2 3-2 7 0 10M12 3c2 3 2 7 0 10" fill="none" stroke="#ddd" stroke-width=".8"/></svg>EPSG:32634</button>
    <button class="mini" aria-label="Messages"><svg viewBox="0 0 16 16"><path d="M8 1.500c9 0 9 10 4 10.500l2 3-5-2.500C-2 13-2 1.500 8 1.500z" fill="#5c5c5c"/><path d="M4 7h2M7.500 7h2M11 7h2" stroke="#ddd" stroke-width="1.500"/></svg></button>
  </footer>
</div>

</body>
</html>
```

FILE: styles.css
```
* {
  box-sizing: border-box;
}
body {
  margin: 0;
  height: 100vh;
  padding: 37px 55px 73px;
  background-color: #000;
  font-family: Inter, "Liberation Sans", sans-serif;
  font-size: 11px;
  color: #333;
  display: flex;
}
button, input, select {
  font: inherit;
  color: inherit;
  margin: 0;
  padding: 0;
}
button {
  border: none;
  background: none;
}
svg {
  display: block;
}
.sprite {
  position: absolute;
  width: 0;
  height: 0;
}
.window {
  flex: 1;
  min-width: 0;
  display: flex;
  flex-direction: column;
  background-color: #ececec;
  border-radius: 10px;
  overflow: hidden;
}

/* title bar */
.titlebar {
  display: grid;
  grid-template-columns: 1fr auto 1fr;
  align-items: center;
  height: 28px;
  background-color: #faf6f0;
}
.titlebar h1 {
  margin: 0;
  font-size: 13px;
  font-weight: 600;
  color: #4a4744;
}
.lights {
  display: flex;
  gap: 8px;
  padding-left: 7px;
}
.lights span {
  width: 12px;
  height: 12px;
  border-radius: 50%;
  background-color: #dedad5;
  border: 1px solid #cbc7c2;
}

/* toolbars */
.toolbar {
  display: flex;
  height: 30px;
  padding: 0 0 2px 5px;
  background: linear-gradient(#f7f7f7, #ebebeb);
  border-top: 1px solid #d2d2d2;
}
.toolbar.digitizing {
  height: 33px;
  border-top: 2px solid #c9c9c9;
  border-bottom: 2px solid #c4c4c4;
}
.group {
  display: flex;
  align-items: center;
  justify-content: space-between;
  padding-right: 8px;
}
.group::before {
  content: "";
  width: 4px;
  height: 18px;
  margin-right: 2px;
  border-left: 1px dotted #bbb;
  border-right: 1px dotted #bbb;
}
.g-file { width: 163px; }
.g-nav { width: 409px; }
.g-select { width: 149px; }
.g-attr { width: 249px; }
.g-source { width: 201px; }
.g-web { width: 90px; }
.g-plugin { width: 40px; }
.g-edit { width: 323px; }
.g-advanced { width: 544px; }
.g-snap { width: 420px; }
.tool {
  flex: none;
  width: 23px;
  height: 23px;
  display: flex;
  align-items: center;
  justify-content: center;
  border-radius: 2px;
}
.tool svg {
  width: 17px;
  height: 17px;
}
.tool.on {
  background-color: #d9d9d9;
  border: 1px solid #b5b5b5;
}
.arrow {
  flex: none;
  width: 12px;
  height: 23px;
  display: flex;
  align-items: center;
  justify-content: center;
}
.arrow svg, .steps svg, .combo svg, .twisty {
  width: 8px;
  height: 5px;
}
.rule {
  width: 1px;
  height: 18px;
  background-color: #ddd;
}
.rule.faint {
  background-color: #e6e6e6;
}

/* fields */
.spin, .combo {
  display: flex;
  flex: none;
  height: 22px;
  background-color: #fff;
  border: 1px solid #bdbdbd;
  border-radius: 2px;
}
.spin input {
  flex: 1;
  min-width: 0;
  padding-left: 4px;
  border: none;
  background: none;
}
.steps {
  width: 14px;
  display: flex;
  flex-direction: column;
  justify-content: center;
  gap: 4px;
  background-color: #f3f3f3;
  border-left: 1px solid #c9c9c9;
}
.steps button {
  display: flex;
  justify-content: center;
}
.combo {
  position: relative;
}
.combo select {
  flex: 1;
  appearance: none;
  padding-left: 4px;
  border: none;
  background: none;
}
.combo svg {
  position: absolute;
  right: 6px;
  top: 8px;
  pointer-events: none;
}
.tolerance {
  width: 96px;
  font-size: 13px;
}
.units {
  width: 98px;
  font-size: 13px;
  background: linear-gradient(#fff, #f0f0f0);
}
.scale {
  width: 91px;
  background: linear-gradient(to left, #f1f1f1 19px, #c9c9c9 19px, #c9c9c9 20px, #fff 20px);
}
.zoom {
  width: 90px;
}
input[type="checkbox"] {
  appearance: none;
  flex: none;
  width: 14px;
  height: 14px;
  background-color: #fff;
  border: 1px solid #c4c4c4;
  display: flex;
  align-items: center;
  justify-content: center;
}
input[type="checkbox"]:checked::before {
  content: "";
  width: 4px;
  height: 8px;
  margin-bottom: 2px;
  border: solid #222;
  border-width: 0 2px 2px 0;
  transform: rotate(35deg);
}

/* layers panel and map */
.content {
  flex: 1;
  min-height: 0;
  display: flex;
}
.layers {
  width: 245px;
  display: flex;
  flex-direction: column;
  padding-right: 6px;
  border-right: 1px solid #c6c6c6;
}
.dock-title {
  display: flex;
  align-items: center;
  gap: 2px;
  height: 18px;
  padding: 0 1px 0 4px;
}
.dock-title h2 {
  flex: 1;
  margin: 0;
  font-size: 11px;
  font-weight: 400;
}
.dock-title svg {
  width: 12px;
  height: 12px;
  fill: none;
  stroke: #666;
}
.dock-tools {
  display: flex;
  align-items: center;
  gap: 2px;
  height: 29px;
  padding-left: 4px;
}
.dock-tools .arrow {
  margin: 0 -2px;
}
.tree {
  flex: 1;
  background-color: #fff;
  border: 1px solid #c9c9c9;
  border-left: none;
  font-size: 13px;
}
.root {
  display: flex;
  align-items: center;
  gap: 6px;
  height: 19px;
  padding-left: 7px;
  background-color: #dcdcdc;
}
.root input {
  margin-left: 2px;
}
.root label {
  font-weight: 700;
  color: #111;
  text-decoration: underline;
}
.vector {
  width: 16px;
  height: 14px;
}
.tree ul {
  display: flex;
  flex-direction: column;
  height: 118px;
  margin: 0;
  padding: 0 0 0 43px;
  list-style: none;
}
.tree li {
  flex: 1;
  display: flex;
  align-items: center;
  gap: 6px;
}
.line {
  width: 18px;
  height: 2px;
}
.l1 { background-color: #111; }
.l2 { background-color: #444; }
.l3 { background-color: #888; }
.l4 { background-color: #bbb; }
.map {
  flex: 1;
  min-width: 0;
  background-color: #fff;
}
.map svg {
  width: 100%;
  height: 100%;
}
.map path {
  fill: none;
  stroke-linejoin: round;
  stroke-linecap: round;
}
.s1 {
  stroke: #111;
  stroke-width: 6;
}
.s2 {
  stroke: #444;
  stroke-width: 4;
}
.s3 {
  stroke: #666;
  stroke-width: 4;
}
.s4 {
  stroke: #a0a0a0;
  stroke-width: 3;
}

/* status bar */
.statusbar {
  display: flex;
  align-items: center;
  gap: 4px;
  height: 30px;
  padding: 0 7px 0 4px;
  border-top: 1px solid #c9c9c9;
}
.locate {
  display: flex;
  align-items: center;
  width: 210px;
  height: 23px;
  margin-right: auto;
  padding-left: 8px;
  gap: 6px;
  background-color: #fff;
  border: 1px solid #bdbdbd;
  border-radius: 2px;
  font-size: 12px;
}
.locate svg {
  width: 14px;
  height: 14px;
}
.locate input {
  flex: 1;
  min-width: 0;
  border: none;
}
.locate input::placeholder {
  color: #888;
}
.coord {
  width: 130px;
  height: 22px;
  text-align: center;
  border: 1px solid #bdbdbd;
  border-radius: 3px;
}
.mini svg, .crs svg {
  width: 16px;
  height: 16px;
}
.scale-label {
  margin-left: 8px;
}
.rotation-label {
  margin: 0 4px 0 6px;
}
.lock {
  margin: 0 4px 0 6px;
}
.lock svg {
  width: 14px;
}
.statusbar input[type="checkbox"] {
  margin-left: 2px;
}
.crs {
  display: flex;
  align-items: center;
  gap: 2px;
  margin: 0 20px 0 11px;
  color: #222;
}
```
